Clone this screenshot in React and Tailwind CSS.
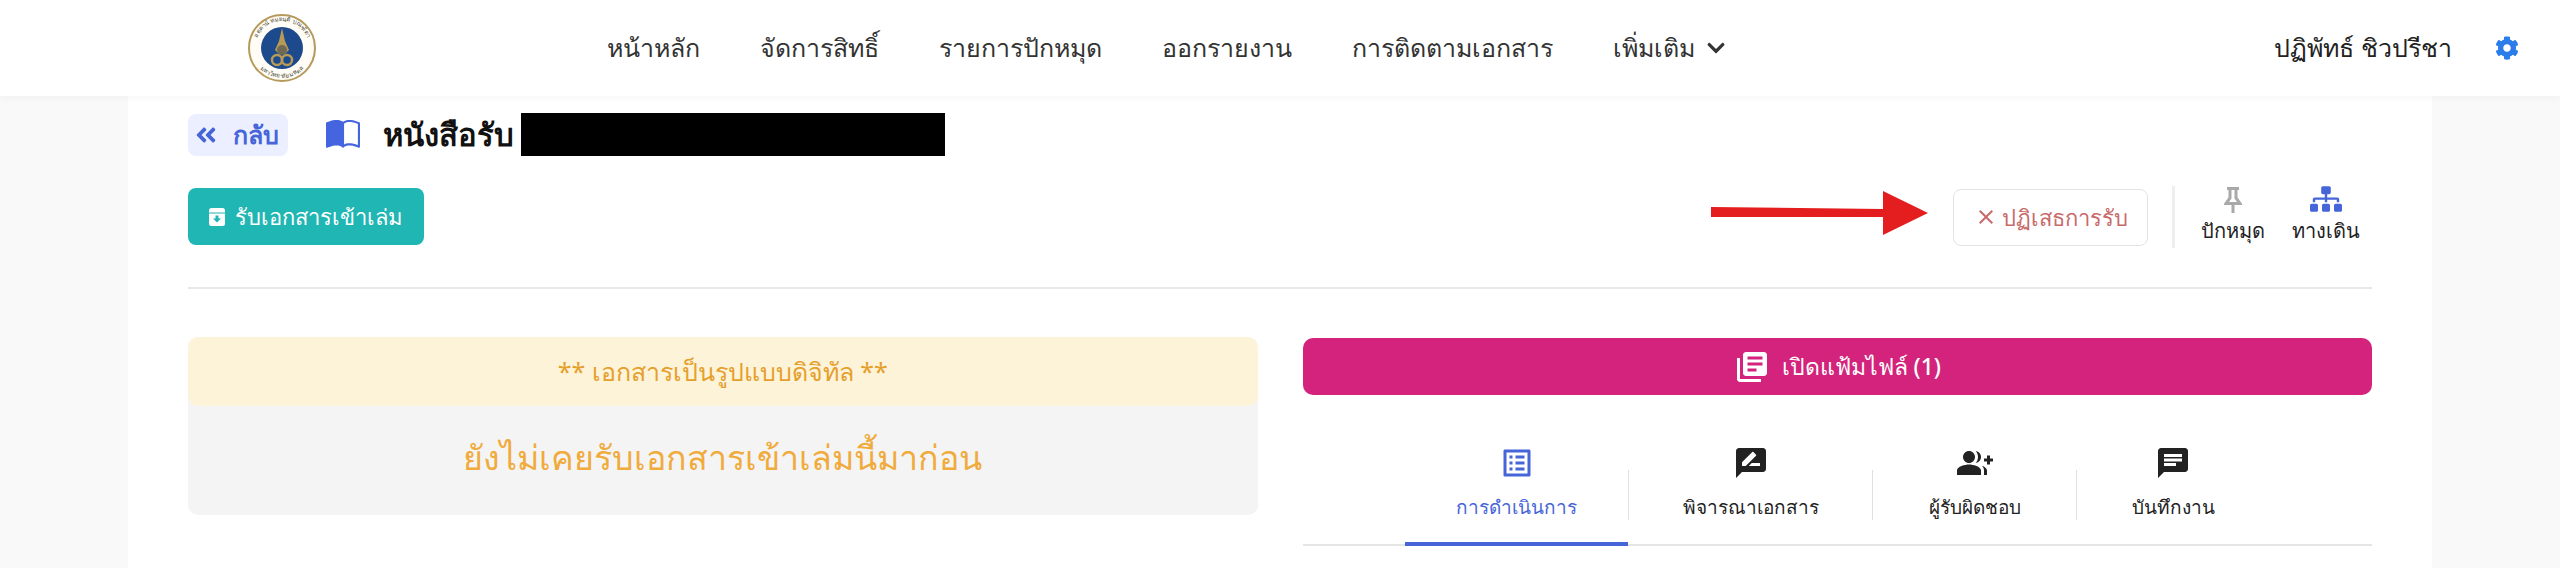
import { BsBookHalf } from 'react-icons/bs';
import { FaAngleDoubleLeft, FaChevronDown, FaCog, FaSitemap } from 'react-icons/fa';
import { MdChat, MdClose, MdGroupAdd, MdLibraryBooks, MdListAlt, MdRateReview } from 'react-icons/md';

const menu = ['หน้าหลัก', 'จัดการสิทธิ์', 'รายการปักหมุด', 'ออกรายงาน', 'การติดตามเอกสาร'];

const tabs = [
  { label: 'การดำเนินการ', Icon: MdListAlt, width: 'w-[223px]', active: true },
  { label: 'พิจารณาเอกสาร', Icon: MdRateReview, width: 'w-[243px]' },
  { label: 'ผู้รับผิดชอบ', Icon: MdGroupAdd, width: 'w-[203px]' },
  { label: 'บันทึกงาน', Icon: MdChat, width: 'w-[192px]' },
];

function Logo() {
  return (
    <svg width="68" height="68" viewBox="0 0 68 68">
      <defs>
        <path id="seal-top" d="M7 34 A27 27 0 0 1 61 34" />
        <path id="seal-bottom" d="M4 34 A30 30 0 0 0 64 34" />
      </defs>
      <circle cx="34" cy="34" r="33" fill="#fffdf6" stroke="#b59a5b" strokeWidth="2" />
      <circle cx="34" cy="34" r="21" fill="#1d4a8c" />
      <text fontSize="6" fill="#4a4a3a" textAnchor="middle">
        <textPath href="#seal-top" startOffset="50%">อตฺตานํ ทมยนฺติ ปณฺฑิตา</textPath>
      </text>
      <text fontSize="6" fill="#4a4a3a" textAnchor="middle">
        <textPath href="#seal-bottom" startOffset="50%">มหาวิทยาลัยมหิดล</textPath>
      </text>
      <path d="M34 14 L37 27 L41 36 L37 40 L31 40 L27 36 L31 27 Z" fill="#b79a56" />
      <circle cx="34" cy="36" r="5" fill="#6f6a55" />
      <circle cx="29" cy="46" r="5" fill="none" stroke="#b79a56" strokeWidth="2.5" />
      <circle cx="39" cy="46" r="5" fill="none" stroke="#b79a56" strokeWidth="2.5" />
    </svg>
  );
}

function Navbar() {
  return (
    <nav className="relative z-10 flex h-24 items-center bg-white pl-[248px] pr-[41px] shadow-[0_2px_8px_rgba(0,0,0,0.04)]">
      <Logo />
      <div className="ml-[291px] flex items-center gap-[60px] text-[25px] text-[#333]">
        {menu.map((item) => (
          <span key={item}>{item}</span>
        ))}
        <span className="flex items-center gap-[11px]">
          เพิ่มเติม
          <FaChevronDown size={20} />
        </span>
      </div>
      <span className="ml-auto text-[25px] text-[#222]">ปฏิพัทธ์ ชิวปรีชา</span>
      <FaCog size={24} className="ml-[43px] text-[#2b7de9]" />
    </nav>
  );
}

function ReceiveIcon() {
  return (
    <svg width="16" height="18" viewBox="0 0 16 18">
      <rect width="16" height="18" rx="2.5" fill="#fff" />
      <path d="M0 5h16" stroke="#20b6b3" strokeWidth="1" />
      <path d="M6.5 7.5h3v3H12l-4 4-4-4h2.5z" fill="#20b6b3" />
    </svg>
  );
}

function Toolbar() {
  return (
    <div className="border-b-2 border-[#e8e8e8] pb-[39px]">
      <div className="flex h-[43px] items-center">
        <button className="flex h-[42px] w-[100px] items-center gap-[15px] rounded-lg bg-[#ecefff] pl-[6px] text-[25px] font-bold text-[#4565d8]">
          <FaAngleDoubleLeft size={24} />
          กลับ
        </button>
        <BsBookHalf size={34} className="ml-[38px] text-[#4565e0]" />
        <span className="ml-[23px] text-[31px] font-bold text-[#111]">หนังสือรับ</span>
        <div className="ml-[7px] h-[43px] w-[424px] bg-black" />
      </div>
      <div className="mt-[32px] flex items-start justify-between">
        <button className="flex h-[57px] w-[236px] items-center gap-[10px] rounded-lg bg-[#20b6b3] pl-[21px] text-[22px] font-medium text-white">
          <ReceiveIcon />
          รับเอกสารเข้าเล่ม
        </button>
        <div className="-mt-[2px] mr-[12px] flex h-[62px] items-center">
          <button className="flex h-[57px] w-[195px] items-center justify-center gap-1 rounded-lg border border-[#e3e3e3] bg-white text-[22px] text-[#c96a6a]">
            <MdClose size={24} />
            ปฏิเสธการรับ
          </button>
          <div className="ml-6 h-[62px] w-[3px] bg-[#eeeeee]" />
          <div className="ml-[26px] flex h-[62px] flex-col items-center text-xl text-[#222]">
            <svg className="mt-px" width="18" height="26" viewBox="0 0 18 26" fill="none" stroke="#a9a9a9" strokeWidth="3">
              <path d="M3 1.5h12M6 2v9L2 16.5h14L12 11V2M9 17v9" />
            </svg>
            <span className="mt-[4px]">ปักหมุด</span>
          </div>
          <div className="ml-[27px] flex h-[62px] flex-col items-center text-xl text-[#222]">
            <FaSitemap className="h-[26px] w-8 text-[#4565d8]" />
            <span className="mt-[5px]">ทางเดิน</span>
          </div>
        </div>
      </div>
    </div>
  );
}

function StatusCard() {
  return (
    <div className="w-[1070px] rounded-[10px] bg-[#f4f4f4]">
      <div className="flex h-[69px] items-center justify-center rounded-[10px] bg-[#fdf3d9] text-[25px] text-[#e5a02c]">
        ** เอกสารเป็นรูปแบบดิจิทัล **
      </div>
      <div className="flex h-[109px] items-center justify-center pb-[6px] text-[34px] font-medium text-[#f0ab3c]">
        ยังไม่เคยรับเอกสารเข้าเล่มนี้มาก่อน
      </div>
    </div>
  );
}

function FilePanel() {
  return (
    <div className="w-[1070px] pt-px">
      <button className="flex h-[57px] w-full items-center justify-center gap-3 rounded-[10px] bg-[#d3237c] text-[23px] font-medium text-white">
        <MdLibraryBooks size={36} />
        เปิดแฟ้มไฟล์ (1)
      </button>
      <div className="mt-[50px] flex justify-center border-b-2 border-[#e5e5e5]">
        {tabs.map(({ label, Icon, width, active }, i) => (
          <div key={label} className="flex items-center">
            {i > 0 && <div className="h-[50px] w-px bg-[#e0e0e0]" />}
            <div
              className={`-mb-[2px] flex h-[101px] flex-col items-center border-b-4 text-[19px] ${width} ${
                active ? 'border-[#4565d8] text-[#4565d8]' : 'border-transparent text-[#222]'
              }`}
            >
              <Icon size={36} />
              <span className="mt-3">{label}</span>
            </div>
          </div>
        ))}
      </div>
    </div>
  );
}

export default function App() {
  return (
    <div className="h-[568px] overflow-hidden bg-[#f9f9f9] font-['Noto_Sans','Liberation_Sans',sans-serif]">
      <Navbar />
      <main className="relative mx-auto h-[472px] w-[2304px] bg-white px-[60px] pt-[17px]">
        <Toolbar />
        <div className="mt-[48px] flex items-start gap-[45px]">
          <StatusCard />
          <FilePanel />
        </div>
        {/* red annotation arrow drawn over the page */}
        <svg className="absolute left-[1583px] top-[95px]" width="218" height="44" viewBox="0 0 218 44">
          <path d="M0 16 L172 18 L172 0 L217 22 L172 44 L172 26 L0 26 Z" fill="#e41e1e" />
        </svg>
      </main>
    </div>
  );
}
